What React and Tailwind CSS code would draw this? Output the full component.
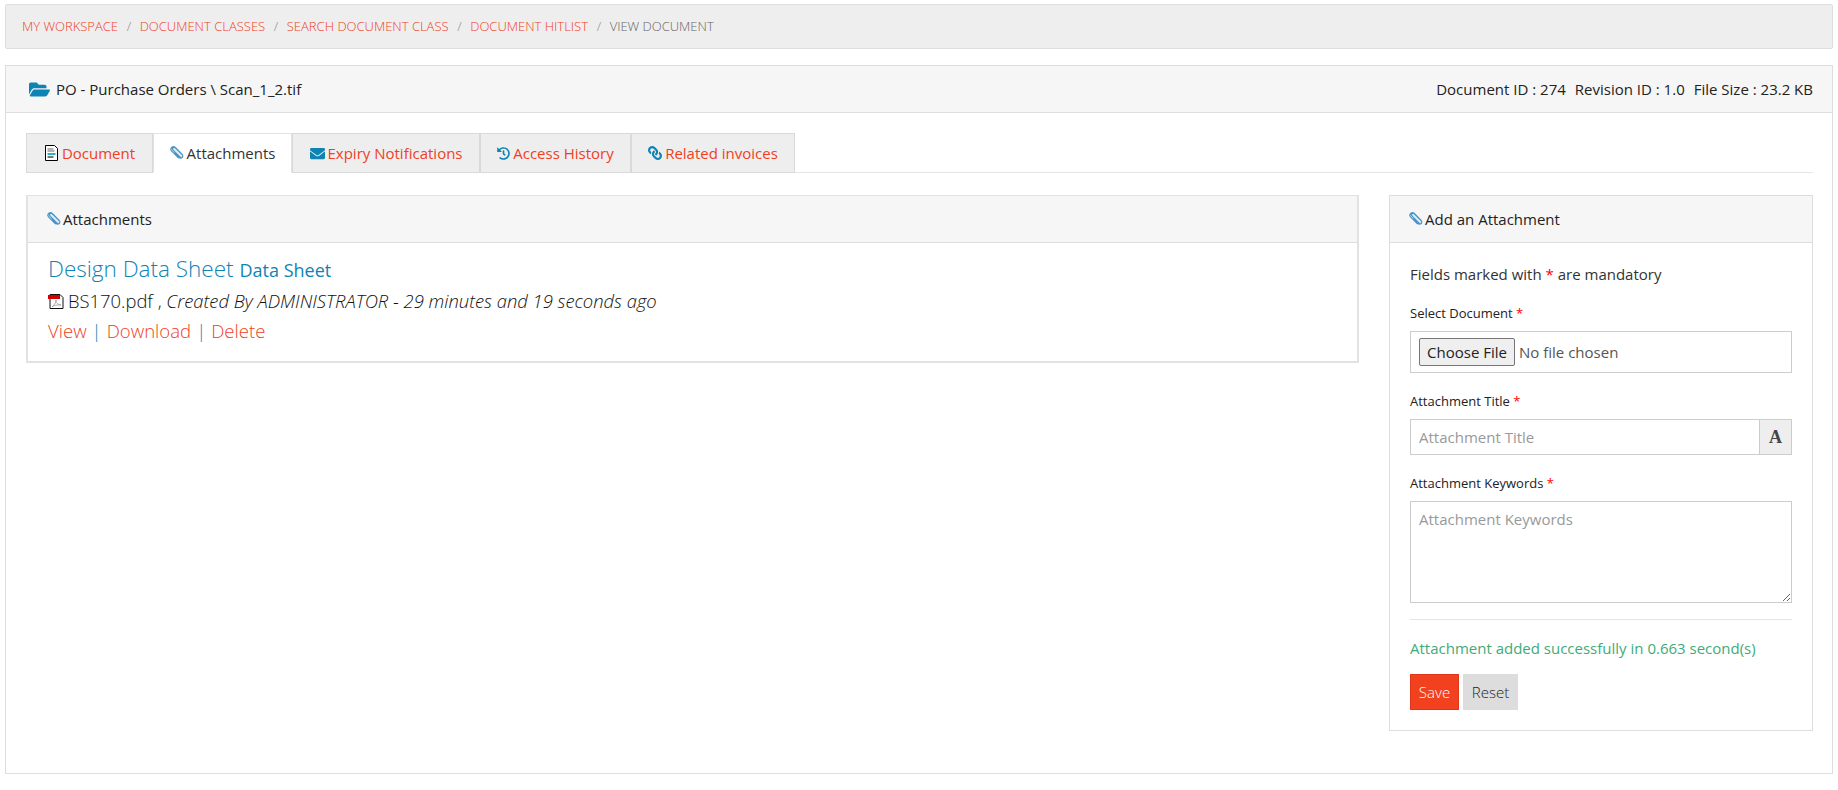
import React from 'react';
import { FaFolderOpen, FaEnvelope, FaHistory, FaLink } from 'react-icons/fa';

// glyphicon style paperclip, tilted outline
const Clip = ({ className = '' }) => (
  <svg viewBox="0 0 14 14" width="14" height="14" className={`inline-block shrink-0 ${className}`} fill="#dcebf5" stroke="#4a94c4" strokeWidth="1.25">
    <path d="M11.2 12.4 3 4.2a1.7 1.7 0 0 1 0-2.4 1.7 1.7 0 0 1 2.4 0l8 8M8.9 12.6 1.6 5.3a2.7 2.7 0 0 1 0-3.8 2.7 2.7 0 0 1 3.8 0l7.2 7.2a2.3 2.3 0 0 1-3.3 3.3L4.6 6.3" transform="translate(0.2 0.1) scale(0.95)" />
  </svg>
);

const DocIcon = () => (
  <svg viewBox="0 0 14 16" width="15" height="16" className="inline-block shrink-0">
    <path d="M1 .5h9l3 3v12H1z" fill="#fff" stroke="#000" />
    <path d="M3 4h6M3 6h7" stroke="#666" />
    <path d="M3 8h8v2H3z" fill="#22b5d0" />
    <path d="M3 11h6v2H3z" fill="#777" />
  </svg>
);

const PdfIcon = () => (
  <svg viewBox="0 0 16 16" width="16" height="16" className="inline-block shrink-0">
    <path d="M2 1.5h10l3 3v11H2z" fill="#fff" stroke="#111" />
    <path d="M0 2h12v4H0z" fill="#d40000" />
    <path d="M4 14c2-2 4-4 4-7 0 3 1 4 5 5-4 0-7 0-9 2z" fill="none" stroke="#999" strokeWidth=".8" />
  </svg>
);

const Req = () => <span className="text-[#ff0000]">*</span>;

const tabs = [
  { label: 'Document', icon: <DocIcon />, w: 'w-[127px]' },
  { label: 'Attachments', icon: <Clip />, w: 'w-[139px]', active: true },
  { label: 'Expiry Notifications', icon: <FaEnvelope className="text-[#0e84b5] text-[15px]" />, w: 'w-[188px]' },
  { label: 'Access History', icon: <FaHistory className="text-[#0e84b5] text-[13px]" />, w: 'w-[151px]' },
  { label: 'Related invoices', icon: <FaLink className="text-[#0e84b5] text-[14px] -scale-x-100" />, w: 'w-[164px]' },
];

const crumbs = ['My Workspace', 'Document Classes', 'Search Document Class', 'Document Hitlist'];

const PanelHead = ({ children }) => (
  <div className="h-[47px] bg-[#f6f6f6] border-b border-[#dddddd] flex items-center gap-[2px] pl-[19px] text-[#222222]">
    {children}
  </div>
);

const App = () => {
  return (
    <div className="min-h-[790px] bg-white pt-[4px] pl-[5px] pr-[5px] text-[15px] text-[#333333] font-['Open_Sans',sans-serif]">
      <div className="h-[45px] bg-[#eeeeee] border border-[#dddddd] rounded-[2px] flex items-center pl-[16px] text-[13px] font-light uppercase">
        {crumbs.map((c) => (
          <React.Fragment key={c}>
            <a className="text-[#f0401f]">{c}</a>
            <span className="text-[#888888] px-[8.6px]">/</span>
          </React.Fragment>
        ))}
        <span className="text-[#666666]">View Document</span>
      </div>

      <div className="mt-[16px] h-[709px] border border-[#dddddd]">
        <div className="h-[47px] bg-[#f6f6f6] border-b border-[#dddddd] flex items-center justify-between pl-[23px] pr-[19px] text-[#222222]">
          <div className="flex items-center gap-[6px]">
            <FaFolderOpen className="text-[#0e84b5] text-[21px]" />
            <span>PO - Purchase Orders \ Scan_1_2.tif</span>
          </div>
          <div className="flex gap-[9px]">
            <span>Document ID : 274</span>
            <span>Revision ID : 1.0</span>
            <span>File Size : 23.2 KB</span>
          </div>
        </div>

        <div className="pt-[20px] pl-[20px] pr-[19px]">
          <div className="flex h-[40px] border-b border-[#e5e5e5]">
            {tabs.map((t) => (
              <div
                key={t.label}
                className={`${t.w} h-[40px] border border-[#d9d9d9] flex items-center justify-center gap-[3px] ${t.active ? 'bg-white text-[#333333] border-x-[#e2e2e2] border-t-[#e2e2e2] border-b-white' : 'bg-[#eeeeee] text-[#f0401f]'}`}
              >
                {t.icon}
                <span>{t.label}</span>
              </div>
            ))}
          </div>

          <div className="mt-[22px] flex gap-[30px] items-start">
            <div className="flex-1">
              <div className="border-t border-x-2 border-b-2 border-[#e2e2e2]">
                <PanelHead>
                  <Clip />
                  <span>Attachments</span>
                </PanelHead>
                <div className="pt-[11px] pb-[15px] pl-[20px] font-light">
                  <div className="flex items-baseline gap-[6px] text-[#0e84b5]">
                    <span className="text-[22.5px] leading-[30px]">Design Data Sheet</span>
                    <span className="text-[18px] font-normal">Data Sheet</span>
                  </div>
                  <div className="flex items-center gap-[4px] text-[18.4px] leading-[30px] mt-[2px] text-[#111111]">
                    <PdfIcon />
                    <span>BS170.pdf , <i>Created By ADMINISTRATOR - 29 minutes and 19 seconds ago</i></span>
                  </div>
                  <div className="text-[18.6px] leading-[30px] text-[#f0401f]">
                    <a>View</a>
                    <span className="text-[#0e84b5] px-[5px]">|</span>
                    <a>Download</a>
                    <span className="text-[#0e84b5] px-[5px]">|</span>
                    <a>Delete</a>
                  </div>
                </div>
              </div>
            </div>

            <div className="w-[424px] border border-[#dddddd]">
              <PanelHead>
                <Clip />
                <span>Add an Attachment</span>
              </PanelHead>
              <div className="px-[20px] pt-[21px] pb-[20px]">
                <p className="leading-[20px]">Fields marked with <Req /> are mandatory</p>
                <label className="block mt-[21px] text-[13px] leading-[17px] text-[#222222]">Select Document <Req /></label>
                <input
                  type="file"
                  className="mt-[9px] block w-full h-[42px] border border-[#cccccc] pl-[8px] pt-[6px] text-[#555555] file:h-[28px] file:w-[96px] file:mr-[4px] file:bg-[#efefef] file:border file:border-[#767676] file:rounded-[2px] file:text-[#222222]"
                />
                <label className="block mt-[20px] text-[13px] leading-[17px] text-[#222222]">Attachment Title <Req /></label>
                <div className="mt-[9px] flex h-[36px] border border-[#cccccc]">
                  <input placeholder="Attachment Title" className="flex-1 min-w-0 px-[8px] outline-none placeholder:text-[#999999]" />
                  <span className="w-[32px] bg-[#eeeeee] border-l border-[#cccccc] flex items-center justify-center text-[#444444] font-['Liberation_Serif',serif] font-bold text-[18px]">
                    A
                  </span>
                </div>
                <label className="block mt-[20px] text-[13px] leading-[17px] text-[#222222]">Attachment Keywords <Req /></label>
                <textarea
                  placeholder="Attachment Keywords"
                  className="mt-[9px] block w-full h-[102px] border border-[#cccccc] px-[8px] py-[6px] outline-none placeholder:text-[#999999]"
                />
                <hr className="mt-[16px] border-[#e5e5e5]" />
                <p className="mt-[18px] leading-[20px] text-[#41ab78]">Attachment added successfully in 0.663 second(s)</p>
                <div className="mt-[16px] flex gap-[4px]">
                  <button className="w-[49px] h-[36px] bg-[#f1411f] border border-[#e0371a] text-white font-light">Save</button>
                  <button className="w-[55px] h-[36px] bg-[#dddddd] text-[#222222] font-light">Reset</button>
                </div>
              </div>
            </div>
          </div>
        </div>
      </div>
    </div>
  );
};

export default App;
